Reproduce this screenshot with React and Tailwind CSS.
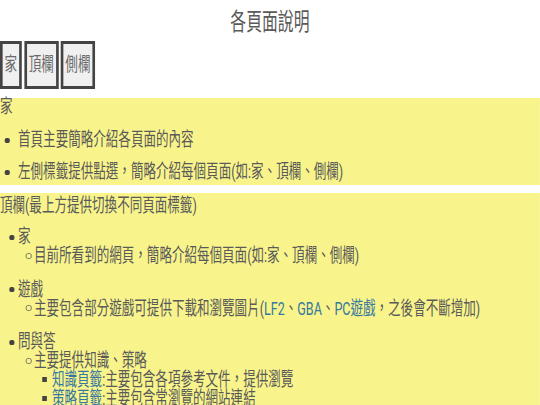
import React from "react";

const Disc = ({ pad }) => (
  <span className={`flex h-[18px] w-[27.3px] shrink-0 items-center ${pad}`}>
    <span className="h-[5px] w-[7.5px] rounded-full bg-[#444]" />
  </span>
);

const Circle = () => (
  <span className="flex h-[19px] w-[24.2px] shrink-0 items-center pl-[12px]">
    <span className="h-[6px] w-[9px] rounded-full border border-[#666]" />
  </span>
);

const Square = () => (
  <span className="flex h-[19px] w-[27.3px] shrink-0 items-center pl-[12.5px]">
    <span className="h-[5px] w-[7.5px] bg-[#444]" />
  </span>
);

const Link = ({ children }) => <span className="text-[#3677a0]">{children}</span>;

export default function App() {
  const tabs = ["家", "頂欄", "側欄"];

  return (
    <div className="h-[405px] w-[540px] overflow-hidden bg-white">
      <div className="w-[818px] origin-top-left scale-x-[0.66] font-['Roboto','Noto_Sans_CJK_TC',sans-serif] text-[19px] text-[#5a5a5a]">
        {/* title */}
        <div className="pt-[8px] text-center text-[24px] leading-[28px]">各頁面說明</div>

        {/* tab buttons */}
        <div className="mt-[5px] flex h-[48px] gap-[3.5px]">
          {tabs.map((t) => (
            <button
              key={t}
              className="flex h-full items-center border-x-[4.5px] border-y-[3px] border-[#444] bg-[#f0f0f0] px-[3px] text-[#6a6a6a]"
            >
              {t}
            </button>
          ))}
        </div>

        {/* 家 */}
        <section className="mt-[9px] bg-[#f8f48b] pb-[4px] leading-[18px]">
          <div>家</div>
          <ul className="mt-[15px] flex flex-col gap-[14px]">
            <li className="flex">
              <Disc pad="pl-[7px]" />
              <span>首頁主要簡略介紹各頁面的內容</span>
            </li>
            <li className="flex">
              <Disc pad="pl-[7px]" />
              <span>左側標籤提供點選，簡略介紹每個頁面(如:家、頂欄、側欄)</span>
            </li>
          </ul>
        </section>

        {/* 頂欄 */}
        <section className="mt-[8px] bg-[#f8f48b] pb-[20px] pt-[4px] leading-[18px]">
          <div>頂欄(最上方提供切換不同頁面標籤)</div>
          <ul className="mt-[13px] flex flex-col gap-[15.5px]">
            <li className="flex">
              <Disc pad="pl-[14px]" />
              <div>
                <div>家</div>
                <ul className="leading-[19px]">
                  <li className="flex">
                    <Circle />
                    <span>目前所看到的網頁，簡略介紹每個頁面(如:家、頂欄、側欄)</span>
                  </li>
                </ul>
              </div>
            </li>
            <li className="flex">
              <Disc pad="pl-[14px]" />
              <div>
                <div>遊戲</div>
                <ul className="leading-[19px]">
                  <li className="flex">
                    <Circle />
                    <span>
                      主要包含部分遊戲可提供下載和瀏覽圖片(<Link>LF2</Link>、<Link>GBA</Link>、
                      <Link>PC遊戲</Link>，之後會不斷增加)
                    </span>
                  </li>
                </ul>
              </div>
            </li>
            <li className="flex">
              <Disc pad="pl-[14px]" />
              <div>
                <div>問與答</div>
                <ul className="leading-[19px]">
                  <li className="flex">
                    <Circle />
                    <div>
                      <div>主要提供知識、策略</div>
                      <ul>
                        <li className="flex">
                          <Square />
                          <span>
                            <Link>知識頁籤</Link>:主要包含各項參考文件，提供瀏覽
                          </span>
                        </li>
                        <li className="flex">
                          <Square />
                          <span>
                            <Link>策略頁籤</Link>:主要包含常瀏覽的網站連結
                          </span>
                        </li>
                      </ul>
                    </div>
                  </li>
                </ul>
              </div>
            </li>
          </ul>
        </section>
      </div>
    </div>
  );
}
